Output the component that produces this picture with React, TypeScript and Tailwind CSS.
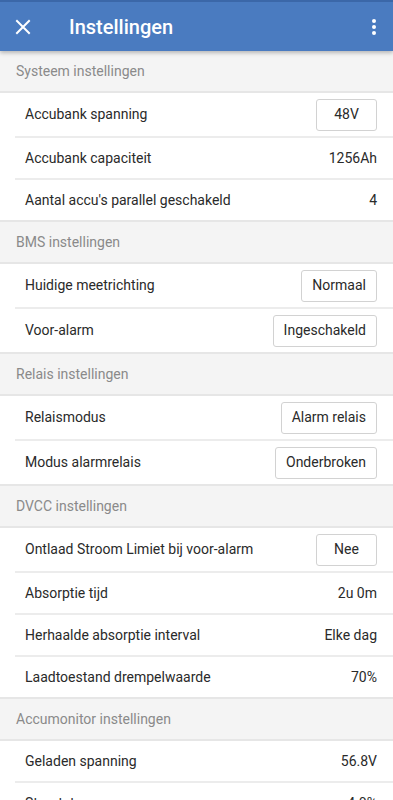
type Row = { label: string; value: string; button?: boolean }
type Section = { title: string; rows: Row[] }

const SECTIONS: Section[] = [
  {
    title: 'Systeem instellingen',
    rows: [
      { label: 'Accubank spanning', value: '48V', button: true },
      { label: 'Accubank capaciteit', value: '1256Ah' },
      { label: "Aantal accu's parallel geschakeld", value: '4' },
    ],
  },
  {
    title: 'BMS instellingen',
    rows: [
      { label: 'Huidige meetrichting', value: 'Normaal', button: true },
      { label: 'Voor-alarm', value: 'Ingeschakeld', button: true },
    ],
  },
  {
    title: 'Relais instellingen',
    rows: [
      { label: 'Relaismodus', value: 'Alarm relais', button: true },
      { label: 'Modus alarmrelais', value: 'Onderbroken', button: true },
    ],
  },
  {
    title: 'DVCC instellingen',
    rows: [
      { label: 'Ontlaad Stroom Limiet bij voor-alarm', value: 'Nee', button: true },
      { label: 'Absorptie tijd', value: '2u 0m' },
      { label: 'Herhaalde absorptie interval', value: 'Elke dag' },
      { label: 'Laadtoestand drempelwaarde', value: '70%' },
    ],
  },
  {
    title: 'Accumonitor instellingen',
    rows: [
      { label: 'Geladen spanning', value: '56.8V' },
      { label: 'Staartstroom', value: '4.0%' },
    ],
  },
]

function SettingRow({ row, last }: { row: Row; last: boolean }) {
  return (
    <div
      className={`${row.button ? 'h-[45px]' : 'h-[42px]'} ${
        last ? 'border-b-2 border-[#e6e6e6]' : 'pl-[15px]'
      }`}
    >
      <div
        className={`flex h-full items-center justify-between pr-4 ${
          last ? 'pl-[25px]' : 'border-b-2 border-[#ececec] pl-[10px]'
        }`}
      >
        <span className="text-[14px] text-[#2a2a2a]">{row.label}</span>
        {row.button ? (
          <span className="flex h-[32px] min-w-[61px] items-center justify-center rounded-[3px] border border-[#d2d2d2] bg-white px-[10px] text-[14px] text-[#2a2a2a]">
            {row.value}
          </span>
        ) : (
          <span className="text-[14px] text-[#2a2a2a]">{row.value}</span>
        )}
      </div>
    </div>
  )
}

export default function App() {
  return (
    <div className="h-[800px] overflow-hidden bg-white" style={{ fontFamily: 'Roboto, "Noto Sans", sans-serif' }}>
      <div className="relative z-10 flex h-[51px] items-center border-t-2 border-[#3b67a8] bg-[#4a7bc0] shadow-[0_2px_4px_rgba(0,0,0,0.25)]">
        <svg className="ml-[15px] h-[16px] w-[16px]" viewBox="0 0 16 16" fill="none" stroke="white" strokeWidth="2" strokeLinecap="square">
          <path d="M2 2L14 14M14 2L2 14" />
        </svg>
        <span className="ml-[38px] text-[20px] font-medium text-white">Instellingen</span>
        <svg className="ml-auto mr-[16px] h-[18px] w-[6px]" viewBox="0 0 6 18" fill="white">
          <circle cx="3" cy="3" r="2" />
          <circle cx="3" cy="9" r="2" />
          <circle cx="3" cy="15" r="2" />
        </svg>
      </div>
      {SECTIONS.map((section) => (
        <div key={section.title}>
          <div className="flex h-[42px] items-center border-b-2 border-[#e6e6e6] bg-[#f4f4f4] px-4 text-[14px] text-[#8a8a8a]">
            {section.title}
          </div>
          {section.rows.map((row, i) => (
            <SettingRow key={row.label} row={row} last={i === section.rows.length - 1} />
          ))}
        </div>
      ))}
    </div>
  )
}
